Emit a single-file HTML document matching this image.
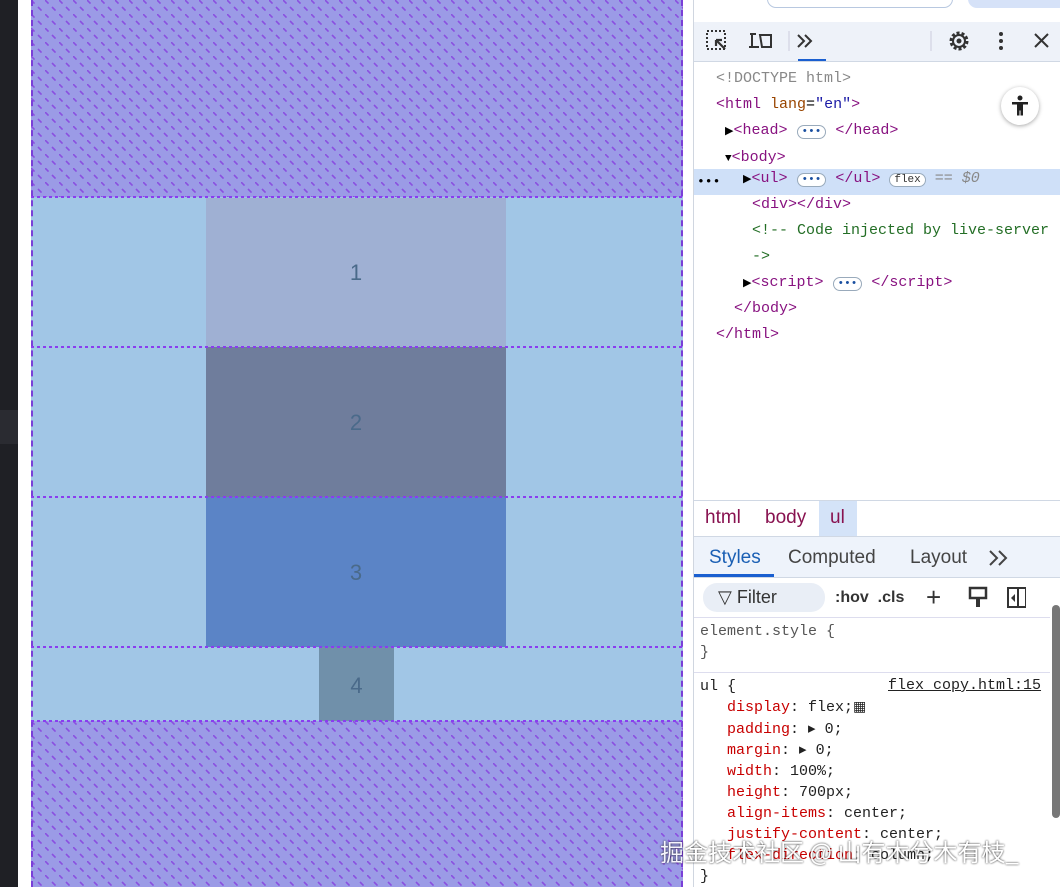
<!DOCTYPE html>
<html><head><style>
*{margin:0;padding:0;box-sizing:border-box}
body{width:1060px;height:887px;overflow:hidden;background:#fff;position:relative;font-family:"Liberation Sans",sans-serif}
.a{position:absolute}
.mono{font-family:"Liberation Mono",monospace;font-size:15px;white-space:pre}
.t{color:#881280}.an{color:#994500}.av{color:#1a1aa6}.p{color:#c80000}
.n{font-size:22px;color:#4a6a8a;text-align:center}
.pill{display:inline-block;border:1px solid #9ab;border-radius:8px;font-size:11px;padding:0 4px;color:#1a4fa0;background:#fff;line-height:12px}
.hl{height:2px;background:repeating-linear-gradient(90deg,#8a3cf0 0 3px,transparent 3px 6px)}
</style></head><body>
<svg width="0" height="0" style="position:absolute"><defs>
<pattern id="h" width="14" height="14" patternUnits="userSpaceOnUse">
<rect width="14" height="14" fill="#9b9be6"/>
<line x1="0" y1="0" x2="14" y2="14" stroke="#8a4fe0" stroke-width="1.6" stroke-dasharray="5 4.9"/>
</pattern></defs></svg>
<div class="a" style="left:0;top:0;width:18px;height:887px;background:#1f2025"></div>
<div class="a" style="left:0;top:410px;width:18px;height:34px;background:#2a2b31"></div>
<svg class="a" style="left:31px;top:0" width="652" height="198"><rect width="652" height="198" fill="url(#h)"/></svg>
<svg class="a" style="left:31px;top:721px" width="652" height="166"><rect width="652" height="166" fill="url(#h)"/></svg>
<div class="a" style="left:31px;top:197px;width:652px;height:524px;background:#a1c6e6"></div>
<div class="a" style="left:206px;top:198px;width:300px;height:149px;background:#9fb0d3"></div>
<div class="a" style="left:206px;top:347px;width:300px;height:150px;background:#6f7d9c"></div>
<div class="a" style="left:206px;top:497px;width:300px;height:150px;background:#5b84c6"></div>
<div class="a" style="left:319px;top:647px;width:75px;height:74px;background:#7090aa"></div>
<div class="a" style="left:31px;top:0;width:652px;height:887px;border-left:2px dashed #7a3fd8;border-right:2px dashed #7a3fd8"></div>
<div class="a hl" style="left:31px;top:196px;width:652px"></div>
<div class="a hl" style="left:31px;top:346px;width:652px"></div>
<div class="a hl" style="left:31px;top:496px;width:652px"></div>
<div class="a hl" style="left:31px;top:646px;width:652px"></div>
<div class="a hl" style="left:31px;top:720px;width:652px"></div>
<div class="a n" style="left:206px;top:260px;width:300px">1</div>
<div class="a n" style="left:206px;top:410px;width:300px">2</div>
<div class="a n" style="left:206px;top:560px;width:300px">3</div>
<div class="a n" style="left:319px;top:673px;width:75px">4</div>

<div class="a" style="left:693px;top:0;width:1px;height:887px;background:#d0d6e0"></div>
<div class="a" style="left:767px;top:-10px;width:186px;height:18px;border:1px solid #b8c8e0;border-radius:10px"></div>
<div class="a" style="left:968px;top:-10px;width:100px;height:18px;background:#d6e2f8;border-radius:10px"></div>
<div class="a" style="left:694px;top:22px;width:366px;height:40px;background:#eef2f9;border-bottom:1px solid #d0d8e4"></div>
<svg class="a" style="left:705px;top:29px" width="350" height="32" viewBox="0 0 350 32">
<rect x="2" y="2" width="18" height="18" fill="none" stroke="#333" stroke-width="2" stroke-dasharray="2 2"/>
<path d="M11 11 L20 20 M11 11 h6 M11 11 v6" stroke="#333" stroke-width="2.2" fill="none"/>
<path d="M51 5 h-6 M47 5 v13 M44 18 h10 M55 6 h11 v12 h-9 z" stroke="#333" stroke-width="2" fill="none"/>
<line x1="84" y1="2" x2="84" y2="22" stroke="#ccd"/>
<path d="M93 6 l6 6 -6 6 M100 6 l6 6 -6 6" stroke="#333" stroke-width="2" fill="none"/>
<rect x="93" y="30" width="28" height="3" fill="#1a5fd0"/>
<line x1="226" y1="2" x2="226" y2="22" stroke="#ccd"/>
<circle cx="254" cy="12" r="8" fill="none" stroke="#333" stroke-width="3" stroke-dasharray="3 2"/>
<circle cx="254" cy="12" r="6" fill="none" stroke="#333" stroke-width="2"/>
<circle cx="254" cy="12" r="2.5" fill="#333"/>
<circle cx="296" cy="5" r="2" fill="#333"/><circle cx="296" cy="12" r="2" fill="#333"/><circle cx="296" cy="19" r="2" fill="#333"/>
<path d="M330 5 l13 13 M343 5 l-13 13" stroke="#333" stroke-width="2"/>
</svg>
<div class="a mono" style="left:716px;top:66px;line-height:26px"><span style="color:#888">&lt;!DOCTYPE html&gt;</span>
<span class="t">&lt;html</span> <span class="an">lang</span>=<span class="av">"en"</span><span class="t">&gt;</span>
 <span style="font-size:11px">▶</span><span class="t">&lt;head&gt;</span> <span class="pill">•••</span> <span class="t">&lt;/head&gt;</span>
 <span style="font-size:11px">▼</span><span class="t">&lt;body&gt;</span></div>
<div class="a" style="left:694px;top:169px;width:366px;height:26px;background:#cfe0f8"></div>
<div class="a mono" style="left:697px;top:174px;line-height:16px;font-size:13px">•••</div>
<div class="a mono" style="left:743px;top:174px;line-height:26px;margin-top:-8px"><span style="font-size:11px">▶</span><span class="t">&lt;ul&gt;</span> <span class="pill">•••</span> <span class="t">&lt;/ul&gt;</span> <span class="pill" style="color:#333">flex</span> <i style="color:#888">== $0</i></div>
<div class="a mono" style="left:752px;top:192px;line-height:26px"><span class="t">&lt;div&gt;&lt;/div&gt;</span>
<span style="color:#236e25">&lt;!-- Code injected by live-server -</span>
<span style="color:#236e25">-&gt;</span></div>
<div class="a mono" style="left:743px;top:270px;line-height:26px"><span style="font-size:11px">▶</span><span class="t">&lt;script&gt;</span> <span class="pill">•••</span> <span class="t">&lt;/script&gt;</span></div>
<div class="a mono" style="left:734px;top:296px;line-height:26px"><span class="t">&lt;/body&gt;</span></div>
<div class="a mono" style="left:716px;top:322px;line-height:26px"><span class="t">&lt;/html&gt;</span></div>
<div class="a" style="left:1001px;top:87px;width:38px;height:38px;border-radius:50%;background:#fff;box-shadow:0 1px 4px rgba(0,0,0,.35)"></div>
<svg class="a" style="left:1008px;top:94px" width="24" height="24" viewBox="0 0 24 24"><circle cx="12" cy="4" r="2.5" fill="#222"/><path d="M4 8 h16 v2.5 h-5 v11 h-2.5 v-5 h-1 v5 h-2.5 v-11 h-5z" fill="#222"/></svg>

<div class="a" style="left:694px;top:500px;width:366px;height:37px;border-top:1px solid #d0d8e4;border-bottom:1px solid #d0d8e4"></div>
<div class="a" style="left:819px;top:501px;width:38px;height:35px;background:#d4e3f8"></div>
<div class="a" style="left:705px;top:507px;font-size:19px;color:#881250">html</div>
<div class="a" style="left:765px;top:507px;font-size:19px;color:#881250">body</div>
<div class="a" style="left:830px;top:507px;font-size:19px;color:#881250">ul</div>
<div class="a" style="left:694px;top:537px;width:366px;height:41px;background:#eef3fb;border-bottom:1px solid #d0d8e4"></div>
<div class="a" style="left:709px;top:547px;font-size:19px;color:#1a5fb4">Styles</div>
<div class="a" style="left:694px;top:574px;width:80px;height:3px;background:#1a5fd0"></div>
<div class="a" style="left:788px;top:547px;font-size:19px;color:#444">Computed</div>
<div class="a" style="left:910px;top:547px;font-size:19px;color:#444">Layout</div>
<svg class="a" style="left:988px;top:549px" width="22" height="18"><path d="M2 2 l7 7 -7 7 M11 2 l7 7 -7 7" stroke="#444" stroke-width="2" fill="none"/></svg>
<div class="a" style="left:703px;top:583px;width:122px;height:29px;border-radius:14px;background:#e9eef6"></div>
<div class="a" style="left:718px;top:587px;font-size:18px;color:#333">▽ Filter</div>
<div class="a" style="left:835px;top:589px;font-size:16px;font-weight:bold;color:#333">:hov&nbsp;&nbsp;.cls</div>
<div class="a" style="left:926px;top:582px;font-size:26px;color:#333">+</div>
<svg class="a" style="left:966px;top:586px" width="60" height="24"><rect x="4" y="2" width="16" height="10" fill="none" stroke="#333" stroke-width="2.5"/><rect x="10" y="12" width="4" height="9" fill="#333"/><rect x="42" y="2" width="18" height="19" fill="none" stroke="#333" stroke-width="2"/><line x1="52" y1="2" x2="52" y2="21" stroke="#333" stroke-width="2"/><path d="M49 8 l-4 4 4 4z" fill="#333"/></svg>
<div class="a" style="left:1052px;top:605px;width:8px;height:213px;background:#777;border-radius:4px"></div>
<div class="a" style="left:694px;top:617px;width:356px;border-top:1px solid #dde"></div>
<div class="a mono" style="left:700px;top:621px;line-height:21px;color:#555">element.style {
}</div>
<div class="a" style="left:694px;top:672px;width:356px;border-top:1px solid #dde"></div>
<div class="a mono" style="left:700px;top:676px;line-height:21px;color:#222">ul {
   <span class="p">display</span>: flex;<span style="font-size:14px">▦</span>
   <span class="p">padding</span>: ▸ 0;
   <span class="p">margin</span>: ▸ 0;
   <span class="p">width</span>: 100%;
   <span class="p">height</span>: 700px;
   <span class="p">align-items</span>: center;
   <span class="p">justify-content</span>: center;
   <span class="p">flex-direction</span>: column;
}</div>
<div class="a mono" style="left:888px;top:677px;text-decoration:underline;color:#222">flex copy.html:15</div>
<div class="a" style="left:660px;top:833px;font-size:24px;color:#fff;font-family:'Noto Sans CJK SC',sans-serif;text-shadow:0 0 2px #000;opacity:.9">掘金技术社区 @ 山有木兮木有枝_</div>
</body></html>
